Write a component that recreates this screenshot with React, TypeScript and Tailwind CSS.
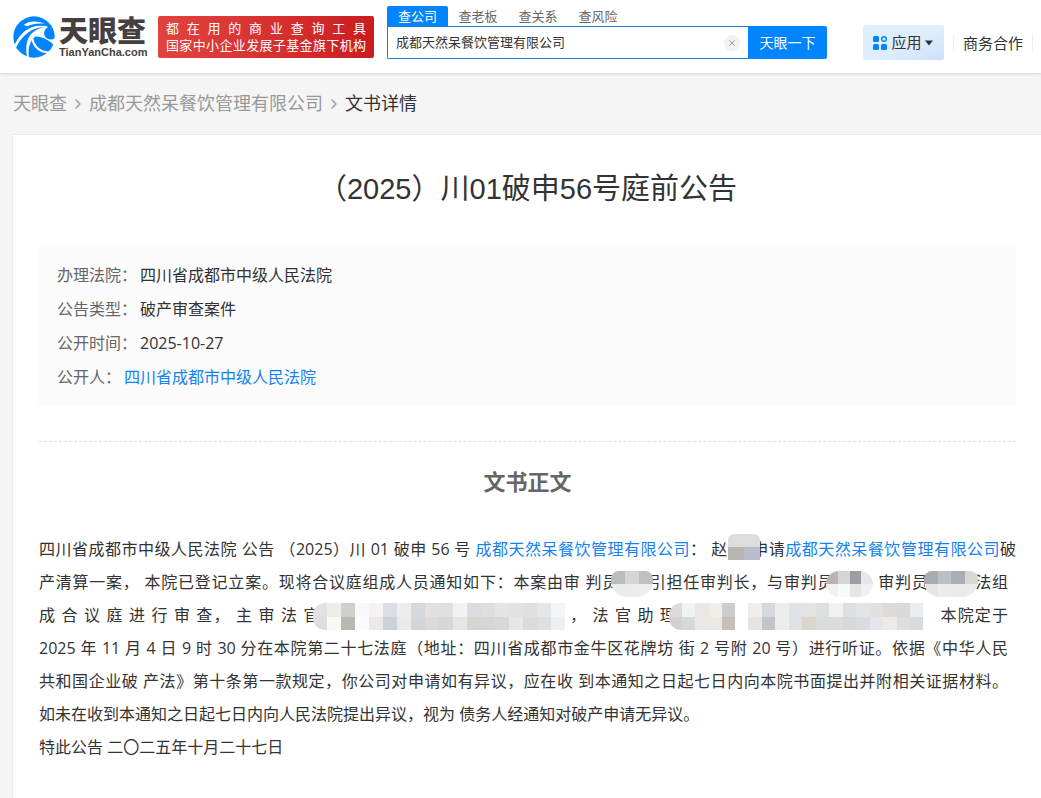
import React from 'react';
import { ChevronRight, X } from 'lucide-react';

const COMPANY = '成都天然呆餐饮管理有限公司';
const COURT = '四川省成都市中级人民法院';

const searchTabs = ['查公司', '查老板', '查关系', '查风险'];

const info = [
  { label: '办理法院：', value: COURT },
  { label: '公告类型：', value: '破产审查案件' },
  { label: '公开时间：', value: '2025-10-27' },
  { label: '公开人：', value: COURT, link: true },
];

const Logo = () => (
  <a href="#home" className="flex w-[137px] shrink-0 items-center gap-1" aria-label="天眼查">
    <svg className="h-[42px] w-[42px] shrink-0" viewBox="14 14 126 126">
      <circle cx="77" cy="77" r="62" fill="#0084ff" />
      <g fill="#fff">
        <path d="M46 41 C62 28 88 28 108 38 C92 35 72 37 58 45Z" />
        <path d="M16 108 C28 76 50 50 84 44 C98 42 110 43 120 46 C98 47 84 50 70 57 C48 69 30 92 21 114Z" />
        <path d="M56 139 C50 104 56 74 78 60 C92 50 106 46 120 46 C106 54 104 68 112 78 C118 86 130 86 141 80 L140 104 C122 86 98 74 80 76 C64 90 58 110 62 141Z" />
        <path d="M74 78 C78 102 96 122 124 120 L119 125 C92 126 72 106 69 82Z" />
      </g>
    </svg>
    <span className="flex flex-col text-[#463f3f]">
      <span className="text-[29px] leading-[30px] font-black">天眼查</span>
      <span className="text-[11px] leading-[12px] font-bold font-['Liberation_Sans',sans-serif]">TianYanCha.com</span>
    </span>
  </a>
);

const AppsIcon = () => (
  <svg className="h-[14px] w-[14px]" viewBox="0 0 14 14" fill="#0084ff">
    <rect x="0" y="0" width="6" height="6" rx="1.5" />
    <rect x="0" y="8" width="6" height="6" rx="1.5" />
    <rect x="8" y="8" width="6" height="6" rx="1.5" />
    <circle cx="11" cy="3" r="2.3" fill="none" stroke="#0084ff" strokeWidth="1.5" />
  </svg>
);

const Header = () => (
  <header className="relative flex h-[73px] items-center bg-white pr-2 pl-[13px] shadow-[0_1px_3px_rgba(0,0,0,0.15)]">
    <Logo />
    <div className="ml-2 h-[42px] w-[216px] shrink-0 rounded-xs bg-linear-to-r from-[#e2433f] to-[#cb1c20] px-2 pt-1 text-[13px] leading-[17px] text-white">
      <p className="[text-align-last:justify]">都在用的商业查询工具</p>
      <p className="[text-align-last:justify]">国家中小企业发展子基金旗下机构</p>
    </div>

    <form className="mb-2 ml-[13px] min-w-0 flex-1" onSubmit={(e) => e.preventDefault()}>
      <div className="flex h-5 text-[13px] leading-[18px] text-[#666]">
        {searchTabs.map((tab, i) => (
          <button
            key={tab}
            type="button"
            className={i === 0 ? 'w-[61px] rounded-t-xs bg-[#0084ff] text-white' : 'w-[60px]'}
          >
            {tab}
          </button>
        ))}
      </div>
      <div className="flex h-[33px]">
        <div className="flex min-w-0 flex-1 items-center rounded-bl-xs border border-r-0 border-[#1a7fd8] px-2">
          <input
            type="text"
            aria-label="公司名称"
            defaultValue={COMPANY}
            className="min-w-0 flex-1 text-[13px] text-[#333] outline-none"
          />
          <button type="button" aria-label="清空" className="flex h-4 w-4 items-center justify-center rounded-full bg-[#f3f3f3]">
            <X className="h-[10px] w-[10px] text-[#888]" />
          </button>
        </div>
        <button type="submit" className="w-[79px] rounded-r-xs bg-[#0084ff] text-[14px] text-white">
          天眼一下
        </button>
      </div>
    </form>

    <div className="mt-3 ml-9 flex shrink-0 items-center text-[15px] text-[#333]">
      <button type="button" className="flex h-[35px] w-[81px] items-center justify-center gap-1 rounded-xs bg-linear-to-br from-[#e0efff] via-[#dfeeff] to-[#cfe1f8]">
        <AppsIcon />
        <span>应用</span>
        <svg className="h-[6px] w-2" viewBox="0 0 8 6" fill="#333">
          <path d="M0 0.5h8L4 5.5z" />
        </svg>
      </button>
      <a href="#cooperation" className="ml-[9px] border-x border-[#eee] px-[9px] leading-[18px]">
        商务合作
      </a>
    </div>
  </header>
);

const Breadcrumb = () => (
  <nav className="flex h-[61px] items-center gap-[3px] pl-[13px] text-[18px] text-[#999]">
    <a href="#home">天眼查</a>
    <ChevronRight className="h-4 w-4" />
    <a href="#company">{COMPANY}</a>
    <ChevronRight className="h-4 w-4" />
    <span className="text-[#333]">文书详情</span>
  </nav>
);

// Pixelated patch over a withheld name: two rows of flat colour cells
const Mosaic = ({ top, bottom, className }: { top: string[]; bottom: string[]; className: string }) => (
  <span className={`relative inline-flex flex-col overflow-hidden align-middle ${className}`} aria-hidden="true">
    {[top, bottom].map((row, r) => (
      <span key={r} className="flex flex-1">
        {row.map((color, i) => (
          <span key={i} className="flex-1" style={{ backgroundColor: color }} />
        ))}
      </span>
    ))}
  </span>
);

const Line = ({ children }: { children: React.ReactNode }) => (
  <span className="block h-[33px] [text-align-last:justify]">{children}</span>
);

const CompanyLink = () => (
  <a href="#company" className="text-[#1482f0]">{COMPANY}</a>
);

const Notice = () => (
  <div className="text-[16px] leading-[33px] text-[#333]">
    <Line>
      {COURT} 公告 （2025）川 01 破申 56 号 <CompanyLink />： 赵
      <Mosaic className="-mr-2 mb-2 h-[26px] w-8 rounded-t-md" top={['#dedede', '#dcdddf']} bottom={['#b8b5b2', '#b9bdca']} />
      申请
      <CompanyLink />破
    </Line>
    <div className="pr-2">
      <Line>
        产清算一案， 本院已登记立案。现将合议庭组成人员通知如下：本案由审 判员
        <Mosaic
          className="-mr-1 -ml-2 h-[26px] w-[42px] rounded-t-lg rounded-b-2xl"
          top={['#b9c0b9', '#d6d6d4', '#bfc0c3']}
          bottom={['#e9ebec', '#ebecee', '#eeeeee']}
        />
        引担任审判长，与审判员
        <Mosaic
          className="-ml-2 h-[26px] w-[47px] rounded-2xl"
          top={['#bab5b2', '#d6d5d3', '#9c9ea3', '#e6e7eb']}
          bottom={['#f1f1f1', '#f5fafb', '#e6e4e4', '#f0f0f2']}
        />
        {' '}审判员
        <Mosaic
          className="-mr-1 -ml-1 h-[26px] w-[54px] rounded-t-lg rounded-b-2xl"
          top={['#aaabaf', '#b9c0c3', '#abacb4', '#d6d8d4']}
          bottom={['#e6e6e6', '#eaeced', '#eaeaea', '#ebebed']}
        />
        法组
      </Line>
      <Line>
        成 合 议 庭 进 行 审 查， 主 审 法 官
        <Mosaic
          className="-ml-2 h-[27px] w-[252px] rounded-l-xl"
          top={['#e2e2e3', '#eeedea', '#cfcfcc', '#f8f9fc', '#f4f2f2', '#dadde3', '#ededee', '#d6d8dc', '#e3e0e0', '#e1e0de', '#f1f3f3', '#dcdcde', '#dfdfdf', '#e6e4e2', '#e4e2df', '#e1e0dc', '#e5e6ea', '#f4f5f5']}
          bottom={['#dcdfe0', '#fbf8ef', '#b7b8b4', '#f9fbfc', '#ece8e9', '#ccd2d6', '#e9eaee', '#d3d5da', '#dddad9', '#d5d7db', '#e4e7e6', '#dad4d0', '#d5d4d6', '#d6d8db', '#e5e7ea', '#dadbda', '#dfdfe2', '#ecf0f4']}
        />
        {' '}， 法 官 助 理
        <Mosaic
          className="-ml-2 h-[27px] w-[66px] rounded-l-xl"
          top={['#dcdbda', '#eff3f1', '#ebe7e6', '#f1ede9', '#cecdce']}
          bottom={['#d3d1cf', '#d3dad9', '#ebe8e5', '#ece9e4', '#c8beba']}
        />
        {' '}
        <Mosaic
          className="mr-4 ml-2 h-[27px] w-[175px]"
          top={['#f0edec', '#d6d8de', '#eeeded', '#dfe2e8', '#e5e3e1', '#dedfe2', '#f2f2f2', '#dedfe1', '#e0e3e7', '#e2e1df', '#dcdbda', '#dcdad9', '#ebedf0']}
          bottom={['#e7e5e4', '#c4c5ca', '#edeced', '#e0e1e5', '#dad5cf', '#dbdcdf', '#dcdbe0', '#d5d9dc', '#d9dde2', '#e3e6ea', '#f0e9e4', '#dedede', '#d6dbe0']}
        />
        本院定于
      </Line>
      <Line>2025 年 11 月 4 日 9 时 30 分在本院第二十七法庭（地址：四川省成都市金牛区花牌坊 街 2 号附 20 号）进行听证。依据《中华人民</Line>
      <Line>共和国企业破 产法》第十条第一款规定，你公司对申请如有异议，应在收 到本通知之日起七日内向本院书面提出并附相关证据材料。</Line>
    </div>
    <p>如未在收到本通知之日起七日内向人民法院提出异议，视为 债务人经通知对破产申请无异议。</p>
    <p>特此公告 二〇二五年十月二十七日</p>
  </div>
);

const App = () => {
  return (
    <div className="flex min-h-screen flex-col bg-[#f5f5f5] font-['Open_Sans','Noto_Sans_CJK_SC',sans-serif]">
      <Header />
      <Breadcrumb />
      <main className="ml-3 flex-1 border-t border-l border-[#ececec] bg-white pt-8 pr-[25px] pl-[26px]">
        <h1 className="text-center text-[29px] leading-[44px] text-[#333] font-['Liberation_Sans','Noto_Sans_CJK_SC',sans-serif]">
          （2025）川01破申56号庭前公告
        </h1>

        <dl className="mt-[35px] bg-[#fbfbfb] px-[18px] pt-3 pb-[11px] text-[16px] leading-[34px]">
          {info.map((row) => (
            <div key={row.label} className="flex gap-[3px]">
              <dt className="text-[#666]">{row.label}</dt>
              <dd className="text-[#333]">
                {row.link ? <a href="#court" className="text-[#1482f0]">{row.value}</a> : row.value}
              </dd>
            </div>
          ))}
        </dl>

        <h2 className="mt-9 border-t border-dashed border-[#ddd] pt-[23px] text-center text-[22px] leading-8 font-bold text-[#666]">
          文书正文
        </h2>
        <div className="pt-9 pb-8">
          <Notice />
        </div>
      </main>
    </div>
  );
};

export default App;
